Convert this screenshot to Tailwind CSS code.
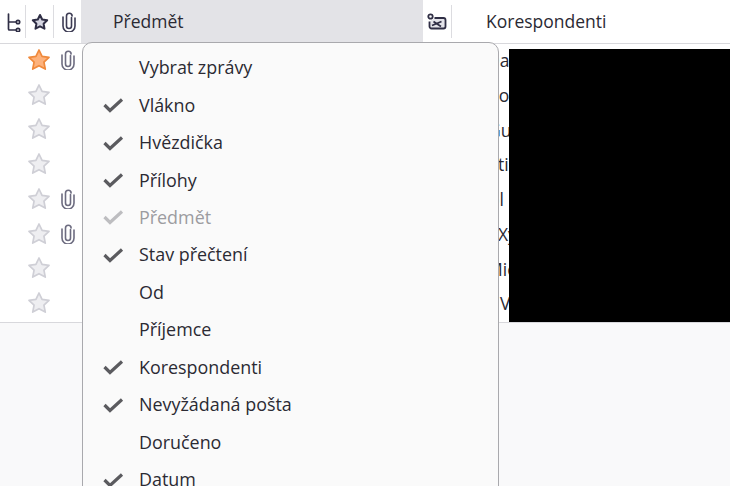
<!DOCTYPE html>
<html lang="cs">
<head>
  <meta charset="UTF-8" />
  <title>Sloupce zpráv</title>
  <script src="https://cdn.jsdelivr.net/npm/@tailwindcss/browser@4"></script>
</head>
<body class="relative w-[730px] h-[486px] overflow-hidden bg-[#f9f9fa] font-['Open_Sans',sans-serif] text-[#2b2a33]">

  <!-- column header -->
  <div class="flex h-[44px] bg-white border-b border-[#d8d8dc]">
    <div class="w-[25px] flex items-center justify-center">
      <svg width="16" height="20" viewBox="0 0 16 20" fill="none" stroke="#2f2e45" stroke-width="1.700" stroke-linecap="round"><path d="M3.500 2v15a1 1 0 0 0 1 1h6.500M3.500 10h7.500"/><circle cx="13" cy="10" r="1.700"/><circle cx="13" cy="18" r="1.700"/></svg>
    </div>
    <div class="w-[28px] flex items-center justify-center border-l border-[#dcdce0] my-[5px]">
      <svg width="18" height="18" viewBox="0 0 18 18" fill="#d6d6e2" stroke="#2f2e45" stroke-width="2" stroke-linejoin="round"><path d="M9 2l2.200 4.500 5 .7-3.600 3.500.9 5L9 13.300l-4.500 2.400.9-5L1.800 7.200l5-.7z"/></svg>
    </div>
    <div class="w-[28px] flex items-center justify-center border-l border-[#dcdce0] my-[5px]">
      <svg class="ml-[2px]" width="14" height="20" viewBox="0 0 14 20" fill="none" stroke="#3d3c54" stroke-width="1.600" stroke-linecap="round"><path d="M9.500 5.500v8.500a2.500 2.500 0 0 1-5 0V4a2.800 2.800 0 0 1 5.600 0"/><path d="M13 6v8a6 6 0 0 1-12 0V5"/></svg>
    </div>
    <div class="w-[342px] bg-[#e3e3e7] flex items-center pl-[32px] text-[17.5px]">Předmět</div>
    <div class="w-[29px] flex items-center justify-center border-r border-[#dcdce0] my-[5px]">
      <svg width="20" height="18" viewBox="0 0 20 18" fill="none" stroke="#2f2e45" stroke-width="1.800"><circle cx="3.500" cy="3.500" r="2.200"/><path d="M7.500 5h9a2 2 0 0 1 2 2v6.500a2 2 0 0 1-2 2h-12a2 2 0 0 1-2-2V8.500" fill="#e4e4ea"/><path d="M5 12.500l9.500-4M6.500 8.500l7.500 5"/></svg>
    </div>
    <div class="flex items-center pl-[34px] text-[17.5px]">Korespondenti</div>
  </div>

  <!-- message rows -->
  <div class="bg-white h-[279px] border-b border-[#d8d8dc] flex flex-col">
    <div class="h-[34.800px] pb-[3px] flex items-center pl-[27px] relative">
      <svg width="24" height="24" viewBox="0 0 18 18" fill="#fdb27c" stroke="#f08a3c" stroke-width="1.300" stroke-linejoin="round"><path d="M9 1.500l2.300 4.800 5.200.7-3.800 3.600 1 5.200L9 13.300l-4.700 2.500 1-5.200L1.500 7l5.200-.7z"/></svg>
      <svg class="ml-[10px]" width="14" height="20" viewBox="0 0 14 20" fill="none" stroke="#6d6c80" stroke-width="1.600" stroke-linecap="round"><path d="M9.500 5.500v8.500a2.500 2.500 0 0 1-5 0V4a2.800 2.800 0 0 1 5.600 0"/><path d="M13 6v8a6 6 0 0 1-12 0V5"/></svg>
      <span class="absolute left-[487px] top-[8px] text-[17.5px] leading-none">Dana</span>
    </div>
    <div class="h-[34.800px] pb-[3px] flex items-center pl-[27px] relative">
      <svg width="24" height="24" viewBox="0 0 18 18" fill="#eeeef1" stroke="#cfcfd6" stroke-width="1.300" stroke-linejoin="round"><path d="M9 1.500l2.300 4.800 5.200.7-3.800 3.600 1 5.200L9 13.300l-4.700 2.500 1-5.200L1.500 7l5.200-.7z"/></svg>
      <span class="absolute left-[488px] top-[8px] text-[17.5px] leading-none">Ro</span>
    </div>
    <div class="h-[34.800px] pb-[3px] flex items-center pl-[27px] relative">
      <svg width="24" height="24" viewBox="0 0 18 18" fill="#eeeef1" stroke="#cfcfd6" stroke-width="1.300" stroke-linejoin="round"><path d="M9 1.500l2.300 4.800 5.200.7-3.800 3.600 1 5.200L9 13.300l-4.700 2.500 1-5.200L1.500 7l5.200-.7z"/></svg>
      <span class="absolute left-[488px] top-[8px] text-[17.5px] leading-none">Gup</span>
    </div>
    <div class="h-[34.800px] pb-[3px] flex items-center pl-[27px] relative">
      <svg width="24" height="24" viewBox="0 0 18 18" fill="#eeeef1" stroke="#cfcfd6" stroke-width="1.300" stroke-linejoin="round"><path d="M9 1.500l2.300 4.800 5.200.7-3.800 3.600 1 5.200L9 13.300l-4.700 2.500 1-5.200L1.500 7l5.200-.7z"/></svg>
      <span class="absolute left-[498px] top-[8px] text-[17.5px] leading-none">tic</span>
    </div>
    <div class="h-[34.800px] pb-[3px] flex items-center pl-[27px] relative">
      <svg width="24" height="24" viewBox="0 0 18 18" fill="#eeeef1" stroke="#cfcfd6" stroke-width="1.300" stroke-linejoin="round"><path d="M9 1.500l2.300 4.800 5.200.7-3.800 3.600 1 5.200L9 13.300l-4.700 2.500 1-5.200L1.500 7l5.200-.7z"/></svg>
      <svg class="ml-[10px]" width="14" height="20" viewBox="0 0 14 20" fill="none" stroke="#6d6c80" stroke-width="1.600" stroke-linecap="round"><path d="M9.500 5.500v8.500a2.500 2.500 0 0 1-5 0V4a2.800 2.800 0 0 1 5.600 0"/><path d="M13 6v8a6 6 0 0 1-12 0V5"/></svg>
      <span class="absolute left-[489px] top-[8px] text-[17.5px] leading-none">ol</span>
    </div>
    <div class="h-[34.800px] pb-[3px] flex items-center pl-[27px] relative">
      <svg width="24" height="24" viewBox="0 0 18 18" fill="#eeeef1" stroke="#cfcfd6" stroke-width="1.300" stroke-linejoin="round"><path d="M9 1.500l2.300 4.800 5.200.7-3.800 3.600 1 5.200L9 13.300l-4.700 2.500 1-5.200L1.500 7l5.200-.7z"/></svg>
      <svg class="ml-[10px]" width="14" height="20" viewBox="0 0 14 20" fill="none" stroke="#6d6c80" stroke-width="1.600" stroke-linecap="round"><path d="M9.500 5.500v8.500a2.500 2.500 0 0 1-5 0V4a2.800 2.800 0 0 1 5.600 0"/><path d="M13 6v8a6 6 0 0 1-12 0V5"/></svg>
      <span class="absolute left-[498px] top-[8px] text-[17.5px] leading-none">Xy</span>
    </div>
    <div class="h-[34.800px] pb-[3px] flex items-center pl-[27px] relative">
      <svg width="24" height="24" viewBox="0 0 18 18" fill="#eeeef1" stroke="#cfcfd6" stroke-width="1.300" stroke-linejoin="round"><path d="M9 1.500l2.300 4.800 5.200.7-3.800 3.600 1 5.200L9 13.300l-4.700 2.500 1-5.200L1.500 7l5.200-.7z"/></svg>
      <span class="absolute left-[487px] top-[8px] text-[17.5px] leading-none">Mic</span>
    </div>
    <div class="h-[34.800px] pb-[3px] flex items-center pl-[27px] relative">
      <svg width="24" height="24" viewBox="0 0 18 18" fill="#eeeef1" stroke="#cfcfd6" stroke-width="1.300" stroke-linejoin="round"><path d="M9 1.500l2.300 4.800 5.200.7-3.800 3.600 1 5.200L9 13.300l-4.700 2.500 1-5.200L1.500 7l5.200-.7z"/></svg>
      <span class="absolute left-[500px] top-[8px] text-[17.5px] leading-none">V</span>
    </div>
  </div>

  <!-- redaction block -->
  <div class="absolute left-[509px] top-[49px] w-[221px] h-[273px] bg-black"></div>

  <!-- context menu -->
  <div class="absolute left-[82px] top-[42px] w-[417px] h-[470px] bg-[#fafafa] border border-[#a9a9ad] rounded-[10px] text-[17.900px] flex flex-col pt-[6px]">
    <div class="h-[37.450px] flex items-center pl-[56px]">Vybrat zprávy</div>
    <div class="h-[37.450px] flex items-center pl-[20px] gap-[15px]"><svg width="21" height="16" viewBox="0 0 21 16" fill="none" stroke="#5b5b5f" stroke-width="3.200"><path d="M1.500 8l5.500 5.500L19 2.500"/></svg>Vlákno</div>
    <div class="h-[37.450px] flex items-center pl-[20px] gap-[15px]"><svg width="21" height="16" viewBox="0 0 21 16" fill="none" stroke="#5b5b5f" stroke-width="3.200"><path d="M1.500 8l5.500 5.500L19 2.500"/></svg>Hvězdička</div>
    <div class="h-[37.450px] flex items-center pl-[20px] gap-[15px]"><svg width="21" height="16" viewBox="0 0 21 16" fill="none" stroke="#5b5b5f" stroke-width="3.200"><path d="M1.500 8l5.500 5.500L19 2.500"/></svg>Přílohy</div>
    <div class="h-[37.450px] flex items-center pl-[20px] gap-[15px] text-[#9c9ca0]"><svg width="21" height="16" viewBox="0 0 21 16" fill="none" stroke="#bdbdc0" stroke-width="3.200"><path d="M1.500 8l5.500 5.500L19 2.500"/></svg>Předmět</div>
    <div class="h-[37.450px] flex items-center pl-[20px] gap-[15px]"><svg width="21" height="16" viewBox="0 0 21 16" fill="none" stroke="#5b5b5f" stroke-width="3.200"><path d="M1.500 8l5.500 5.500L19 2.500"/></svg>Stav přečtení</div>
    <div class="h-[37.450px] flex items-center pl-[56px]">Od</div>
    <div class="h-[37.450px] flex items-center pl-[56px]">Příjemce</div>
    <div class="h-[37.450px] flex items-center pl-[20px] gap-[15px]"><svg width="21" height="16" viewBox="0 0 21 16" fill="none" stroke="#5b5b5f" stroke-width="3.200"><path d="M1.500 8l5.500 5.500L19 2.500"/></svg>Korespondenti</div>
    <div class="h-[37.450px] flex items-center pl-[20px] gap-[15px]"><svg width="21" height="16" viewBox="0 0 21 16" fill="none" stroke="#5b5b5f" stroke-width="3.200"><path d="M1.500 8l5.500 5.500L19 2.500"/></svg>Nevyžádaná pošta</div>
    <div class="h-[37.450px] flex items-center pl-[56px]">Doručeno</div>
    <div class="h-[37.450px] flex items-center pl-[20px] gap-[15px]"><svg width="21" height="16" viewBox="0 0 21 16" fill="none" stroke="#5b5b5f" stroke-width="3.200"><path d="M1.500 8l5.500 5.500L19 2.500"/></svg>Datum</div>
  </div>
</body>
</html>
